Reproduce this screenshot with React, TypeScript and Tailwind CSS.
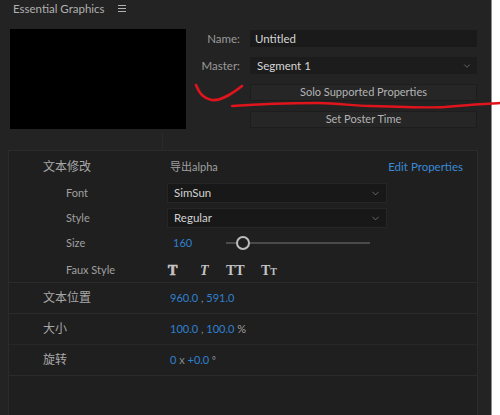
import { ChevronDown } from 'lucide-react';

const UI_FONT = { fontFamily: 'Lato, "Noto Sans CJK SC", sans-serif' };

function Dropdown({ value }: { value: string }) {
  return (
    <div className="flex h-[20px] w-[220px] items-center justify-between border border-[#262626] bg-[#181818] pl-[6px] pr-[5px] text-[11.5px] text-[#d2d2d2]">
      <span>{value}</span>
      <ChevronDown size={11} strokeWidth={1.5} className="text-[#8a8a8a]" />
    </div>
  );
}

/** Essential Graphics panel with a red pen annotation on top */
export default function App() {
  return (
    <div className="relative flex h-[415px] w-[500px] bg-white" style={UI_FONT}>
      <div className="flex h-full w-[492px] flex-col overflow-hidden border-r border-[#8c8c8c] bg-[#232323]">
        {/* ── Header ── */}
        <div className="flex h-[17px] items-center gap-[13px] pl-[13px] text-[11.5px] text-[#b0b0b0]">
          <span>Essential Graphics</span>
          <span className="flex w-[8px] flex-col gap-[2px]">
            <span className="h-px bg-[#b0b0b0]" />
            <span className="h-px bg-[#b0b0b0]" />
            <span className="h-px bg-[#b0b0b0]" />
          </span>
        </div>

        {/* ── Thumbnail + master props ── */}
        <div className="flex pl-[10px] pt-[12px]">
          <div className="h-[100px] w-[176px] bg-black" />
          <div className="flex flex-col gap-[10px] pt-[1px] text-[11.5px]">
            <div className="flex h-[17px] items-center gap-[10px]">
              <span className="w-[54px] text-right text-[#9a9a9a]">Name:</span>
              <div className="flex h-[17px] w-[227px] items-center bg-[#1a1a1a] pl-[5px] text-[#d6d6d6]">
                Untitled
              </div>
            </div>
            <div className="flex h-[17px] items-center gap-[10px]">
              <span className="w-[54px] text-right text-[#9a9a9a]">Master:</span>
              <div className="flex h-[17px] w-[227px] items-center justify-between bg-[#1c1c1c] pl-[7px] pr-[5px] text-[#d6d6d6]">
                <span>Segment 1</span>
                <ChevronDown size={10} strokeWidth={1.5} className="text-[#8a8a8a]" />
              </div>
            </div>
            <div className="flex h-[17px] items-center gap-[10px]">
              <span className="w-[54px]" />
              <div className="flex h-[17px] w-[227px] items-center justify-center border border-[#1d1d1d] bg-[#262626] text-[11px] text-[#b4b4b4]">
                Solo Supported Properties
              </div>
            </div>
            <div className="flex h-[17px] items-center gap-[10px]">
              <span className="w-[54px]" />
              <div className="flex h-[17px] w-[227px] items-center justify-center border border-[#1d1d1d] bg-[#262626] text-[11px] text-[#b4b4b4]">
                Set Poster Time
              </div>
            </div>
          </div>
        </div>

        {/* ── Faint strip above the properties list ── */}
        <div className="mx-[10px] mt-[4px] flex h-[17px] w-[468px]">
          <div className="w-[153px] border-r border-[#2a2a2a]" />
        </div>

        {/* ── Properties list ── */}
        <div className="ml-[8px] flex w-[470px] flex-1 flex-col border-l border-t border-r border-[#2b2b2b] bg-[#1f1f1f] text-[11px]">
          <div className="flex flex-col border-b border-[#2b2b2b] pb-[6px] pt-[7px]">
            <div className="grid h-[16px] grid-cols-[158px_1fr] items-center">
              <span className="pl-[34px] text-[12px] text-[#a8a8a8]">文本修改</span>
              <div className="flex items-center justify-between pl-[3px] pr-[14px]">
                <span className="text-[#a0a0a0]">导出alpha</span>
                <span className="text-[11.5px] text-[#3a8ad8]">Edit Properties</span>
              </div>
            </div>
            <div className="mt-[9px] grid h-[20px] grid-cols-[158px_1fr] items-center">
              <span className="pl-[57px] text-[#a0a0a0]">Font</span>
              <Dropdown value="SimSun" />
            </div>
            <div className="mt-[5px] grid h-[20px] grid-cols-[158px_1fr] items-center">
              <span className="pl-[57px] text-[#a0a0a0]">Style</span>
              <Dropdown value="Regular" />
            </div>
            <div className="mt-[7px] grid h-[16px] grid-cols-[158px_1fr] items-center">
              <span className="pl-[57px] text-[#a0a0a0]">Size</span>
              <div className="flex items-center">
                <span className="w-[59px] pl-[6px] text-[#2f80d0]">160</span>
                <div className="relative flex h-[16px] w-[144px] items-center">
                  <div className="h-[2px] w-full bg-[#4a4a4a]" />
                  <span className="absolute left-[10px] top-px h-[14px] w-[14px] rounded-full border-2 border-[#bdbdbd] bg-[#1f1f1f]" />
                </div>
              </div>
            </div>
            <div className="mt-[9px] grid h-[16px] grid-cols-[158px_1fr] items-center">
              <span className="pl-[57px] text-[#a0a0a0]">Faux Style</span>
              <div
                className="flex items-center pl-[1px] text-[14px] font-bold text-[#c4c4c4]"
                style={{ fontFamily: '"Liberation Serif", serif' }}
              >
                <span className="w-[32px]" style={{ WebkitTextStroke: '0.7px #c4c4c4' }}>T</span>
                <span className="w-[26px] italic">T</span>
                <span className="w-[35px]">TT</span>
                <span>
                  T<span className="text-[10px]">T</span>
                </span>
              </div>
            </div>
          </div>

          <div className="grid h-[31px] grid-cols-[158px_1fr] items-center border-b border-[#2b2b2b]">
            <span className="pl-[34px] text-[12px] text-[#a8a8a8]">文本位置</span>
            <span className="pl-[3px] text-[#2f80d0]">
              960.0 <span className="text-[#8a8a8a]">,</span> 591.0
            </span>
          </div>
          <div className="grid h-[31px] grid-cols-[158px_1fr] items-center border-b border-[#272727]">
            <span className="pl-[34px] text-[12px] text-[#a8a8a8]">大小</span>
            <span className="pl-[3px] text-[#2f80d0]">
              100.0 <span className="text-[#8a8a8a]">,</span> 100.0{' '}
              <span className="text-[#a0a0a0]">%</span>
            </span>
          </div>
          <div className="grid h-[31px] grid-cols-[158px_1fr] items-center border-b border-[#2b2b2b]">
            <span className="pl-[34px] text-[12px] text-[#a8a8a8]">旋转</span>
            <span className="pl-[3px] text-[#2f80d0]">
              0 <span className="text-[#8a8a8a]">x</span> +0.0{' '}
              <span className="text-[9px] text-[#a0a0a0]">°</span>
            </span>
          </div>
        </div>
      </div>

      {/* Red pen annotation */}
      <svg
        className="pointer-events-none absolute left-0 top-0"
        width="500"
        height="415"
        viewBox="0 0 500 415"
        fill="none"
      >
        <path
          d="M196 85 C199 92 202 98 212 100 C222 101 233 93 242 86"
          stroke="#e0141c"
          strokeWidth="2.6"
          strokeLinecap="round"
        />
        <path
          d="M232 106 C260 104 290 103 318 103 C340 103 352 106 370 106 C400 107 430 108 445 107 C465 105 485 104 500 103"
          stroke="#e0141c"
          strokeWidth="2.4"
          strokeLinecap="round"
        />
      </svg>
    </div>
  );
}
